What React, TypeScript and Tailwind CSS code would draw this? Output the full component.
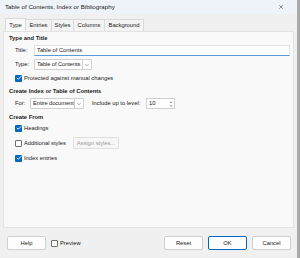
import { Check, ChevronDown, X } from 'lucide-react';

const font = { fontFamily: '"Liberation Sans", Arial, sans-serif' };

function Box({ checked }: { checked?: boolean }) {
    return checked ? (
        <span className="shrink-0 w-[7px] h-[7px] rounded-[1px] bg-[#0067c0] flex items-center justify-center">
            <Check className="w-[6px] h-[6px] text-white" strokeWidth={4} />
        </span>
    ) : (
        <span className="shrink-0 w-[7px] h-[7px] rounded-[1px] border border-[#6e6e6e] bg-white" />
    );
}

function CheckRow({ label, checked }: { label: string; checked?: boolean }) {
    return (
        <div className="flex items-center gap-[2px] h-[10px]">
            <Box checked={checked} />
            <span className="whitespace-nowrap">{label}</span>
        </div>
    );
}

function Select({ value, wide }: { value: string; wide?: boolean }) {
    return (
        <div
            className={`${
                wide ? 'w-[58px]' : 'w-[54px]'
            } shrink-0 h-[11px] bg-white border border-[#d0d0d0] rounded-[1px] flex items-center overflow-hidden`}
        >
            <span className="flex-1 min-w-0 pl-[2px] whitespace-nowrap overflow-hidden tracking-[-0.1px]">
                {value}
            </span>
            <span className="shrink-0 w-[9px] h-full border-l border-[#d0d0d0] flex items-center justify-center">
                <ChevronDown className="w-[6px] h-[6px] text-[#555]" strokeWidth={2} />
            </span>
        </div>
    );
}

function Button({ label, primary }: { label: string; primary?: boolean }) {
    return (
        <div
            className={`w-[39px] h-[14px] rounded-[2px] bg-[#fdfdfd] flex items-center justify-center border ${
                primary ? 'border-[#0067c0]' : 'border-[#d0d0d0]'
            }`}
        >
            {label}
        </div>
    );
}

export default function App() {
    const tabs = [
        { name: 'Type', w: 'w-[21px]' },
        { name: 'Entries', w: 'w-[27px]' },
        { name: 'Styles', w: 'w-[23px]' },
        { name: 'Columns', w: 'w-[32px]' },
        { name: 'Background', w: 'w-[40px]' },
    ];
    return (
        <div
            className="w-[300px] h-[258px] bg-[#f0f0f0] border-r-[3px] border-[#a9a9a9] flex flex-col text-[5.8px] text-[#1a1a1a]"
            style={font}
        >
            <div className="h-[14px] bg-[#eef3fa] flex items-center justify-between pl-[5px] pr-[13px]">
                <span className="text-[6.2px]">Table of Contents, Index or Bibliography</span>
                <X className="w-[6px] h-[6px] text-[#333]" strokeWidth={2} />
            </div>
            <div className="flex pl-[5px] h-[17px] items-end">
                {tabs.map((t, i) => (
                    <div
                        key={t.name}
                        className={`${t.w} flex items-center justify-center border border-b-0 border-[#dadada] -mr-px ${
                            i === 0 ? 'bg-[#f9f9f9] h-[13px]' : 'bg-[#f3f3f3] h-[12px]'
                        }`}
                    >
                        {t.name}
                    </div>
                ))}
            </div>
            <div className="ml-[3px] w-[291px] h-[197px] bg-[#f9f9f9] border border-[#e3e3e3] flex flex-col pl-[5px] pt-[2px]">
                <div className="font-bold h-[9px] flex items-center">Type and Title</div>
                <div className="flex flex-col pl-[6px] gap-[3px] mt-[2px]">
                    <div className="flex items-center">
                        <span className="shrink-0 w-[19px]">Title:</span>
                        <div className="w-[256px] h-[11px] bg-white border border-[#e2e2e2] border-b-[#5a9bd8] flex items-center pl-[2px]">
                            Table of Contents
                        </div>
                    </div>
                    <div className="flex items-center">
                        <span className="shrink-0 w-[19px]">Type:</span>
                        <Select value="Table of Contents" wide />
                    </div>
                    <CheckRow label="Protected against manual changes" checked />
                </div>
                <div className="font-bold h-[9px] flex items-center mt-[4px]">Create Index or Table of Contents</div>
                <div className="flex items-center pl-[6px] mt-[2px]">
                    <span className="shrink-0 w-[15px]">For:</span>
                    <Select value="Entire document" />
                    <span className="shrink-0 ml-[8px] w-[54px] whitespace-nowrap">Include up to level:</span>
                    <div className="shrink-0 w-[29px] h-[11px] bg-white border border-[#d0d0d0] flex items-center">
                        <span className="flex-1 pl-[2px]">10</span>
                        <span className="w-[6px] flex flex-col items-center text-[3px] leading-[4px] text-[#666]">
                            <span>▲</span>
                            <span>▼</span>
                        </span>
                    </div>
                </div>
                <div className="font-bold h-[9px] flex items-center mt-[4px]">Create From</div>
                <div className="flex flex-col pl-[6px] gap-[4px] mt-[1px]">
                    <CheckRow label="Headings" checked />
                    <div className="flex items-center">
                        <div className="shrink-0 w-[58px]">
                            <CheckRow label="Additional styles" />
                        </div>
                        <div className="shrink-0 w-[46px] h-[12px] border border-[#e0e0e0] bg-[#f7f7f7] text-[#9a9a9a] flex items-center justify-center rounded-[1px]">
                            Assign styles...
                        </div>
                    </div>
                    <CheckRow label="Index entries" checked />
                </div>
            </div>
            <div className="flex items-center h-[30px] pl-[7px] pr-[6px]">
                <Button label="Help" />
                <div className="ml-[5px] flex items-center gap-[2px]">
                    <Box />
                    <span>Preview</span>
                </div>
                <div className="ml-auto flex gap-[5px]">
                    <Button label="Reset" />
                    <Button label="OK" primary />
                    <Button label="Cancel" />
                </div>
            </div>
        </div>
    );
}
